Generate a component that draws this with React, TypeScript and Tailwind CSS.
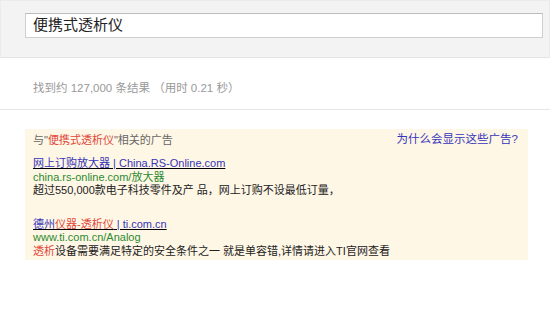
const FONT = "font-['Liberation_Sans','Noto_Sans_CJK_SC',sans-serif]";

interface Ad {
	title: React.ReactNode;
	url: string;
	desc: React.ReactNode;
}

const ADS: Ad[] = [
	{
		title: <span className="text-[#3535b8]">网上订购放大器 | China.RS-Online.com</span>,
		url: "china.rs-online.com/放大器",
		desc: "超过550,000款电子科技零件及产 品，网上订购不设最低订量，",
	},
	{
		title: (
			<>
				<span className="text-[#3535b8]">德州</span>
				<span className="text-[#e0483a]">仪器-透析仪</span>
				<span className="text-[#3535b8]"> | ti.com.cn</span>
			</>
		),
		url: "www.ti.com.cn/Analog",
		desc: (
			<>
				<span className="text-[#e0483a]">透析</span>设备需要满足特定的安全条件之一 就是单容错,详情请进入TI官网查看
			</>
		),
	},
];

function AdItem({ ad, first }: { ad: Ad; first: boolean }) {
	return (
		<div className={`${first ? "mt-[10px]" : "mt-[20px]"} flex flex-col text-[11px] leading-[13.5px]`}>
			<a className="underline w-fit">{ad.title}</a>
			<div className="text-[#2a8a2e]">{ad.url}</div>
			<div className="text-[#222]">{ad.desc}</div>
		</div>
	);
}

export default function App() {
	return (
		<div className={`${FONT} w-[550px] h-[313px] bg-white overflow-hidden`}>
			{/* search bar */}
			<div className="h-[58px] bg-[#f3f3f3] border border-[#ebebeb] border-b-[#e4e4e4] pt-[12px] pl-[24px] pr-[6px]">
				<div className="h-[25px] bg-white border border-[#cfcfcf] border-t-[#bdbdbd] flex items-center pl-[7px] text-[15px] text-[#222]">
					便携式透析仪
				</div>
			</div>

			{/* stats */}
			<div className="h-[52px] border-b border-[#e5e5e5] pl-[33px] pt-[23px] text-[11.5px] leading-[14px] text-[#999]">
				找到约 127,000 条结果 （用时 0.21 秒）
			</div>

			{/* ads */}
			<div className="ml-[25px] mt-[19px] w-[503px] h-[131px] bg-[#fff7e6] pl-[8px] pr-[10px] pt-[4px]">
				<div className="flex justify-between items-center h-[14px] text-[11px]">
					<div className="text-[#666]">
						与"<span className="text-[#e0483a]">便携式透析仪</span>"相关的广告
					</div>
					<a className="text-[#3535b8] text-[11.5px]">为什么会显示这些广告?</a>
				</div>
				{ADS.map((ad, i) => (
					<AdItem key={i} ad={ad} first={i === 0} />
				))}
			</div>
		</div>
	);
}
